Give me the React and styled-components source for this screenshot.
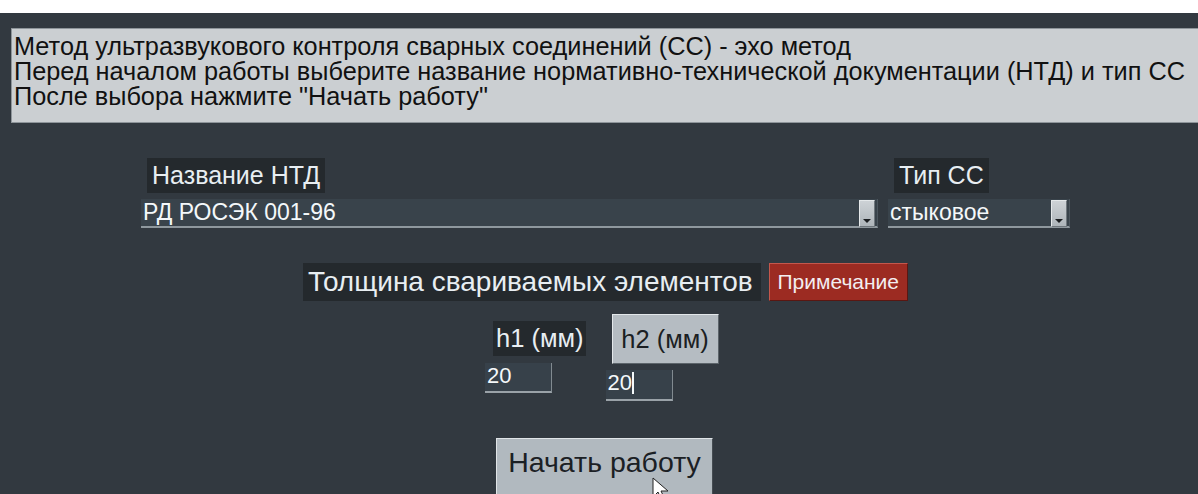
import React from 'react';
import styled, { createGlobalStyle } from 'styled-components';

const GlobalStyle = createGlobalStyle`
  html, body {
    margin: 0;
    padding: 0;
    background: #ffffff;
  }
  body {
    font-family: 'Liberation Sans', Arial, sans-serif;
  }
`;

const Screen = styled.div`
  margin-top: 13px;
  height: 481px;
  background: #323940;
  overflow: hidden;
  position: relative;
`;

const InfoPanel = styled.div`
  margin: 15px 0 0 11px;
  height: 95px;
  box-sizing: border-box;
  padding: 5px 0 0 2px;
  background: #cbcfd2;
  border: 1px solid #8e959a;
  border-right: none;
  color: #111;
  font-size: 25.3px;
  line-height: 25px;
  white-space: nowrap;
`;

const SelectRow = styled.div`
  display: flex;
  margin: 35px 0 0 141px;
  gap: 10px;
`;

const Field = styled.div`
  display: flex;
  flex-direction: column;
  width: ${p => p.$w}px;
`;

const Label = styled.span`
  align-self: flex-start;
  margin-left: ${p => p.$indent || 0}px;
  padding: ${p => p.$pad || '4px 5px'};
  background: #24292d;
  color: #e8eef2;
  font-size: ${p => p.$size || 25}px;
  line-height: ${p => p.$lh || 27}px;
  white-space: nowrap;
`;

const Select = styled.div`
  margin-top: 6px;
  height: 29px;
  display: flex;
  align-items: center;
  justify-content: space-between;
  box-sizing: border-box;
  padding: 0 2px 0 2px;
  background: #39434b;
  border-bottom: 2px solid #8f989e;
  border-right: 1px solid #4c565e;
  color: #f4f8fa;
  font-size: 23px;
`;

const DropButton = styled.div`
  width: 16px;
  height: 27px;
  margin-top: 1px;
  box-sizing: border-box;
  background: linear-gradient(#cdd2d6, #aeb5ba);
  border: 1px solid #e4e8ea;
  border-bottom-color: #6f777d;
  border-right-color: #6f777d;
  display: flex;
  align-items: flex-end;
  justify-content: center;
  padding-bottom: 3px;

  &::after {
    content: '';
    border-left: 4px solid transparent;
    border-right: 4px solid transparent;
    border-top: 4px solid #1b1e21;
  }
`;

const ThicknessRow = styled.div`
  display: flex;
  align-items: center;
  gap: 8px;
  margin: 35px 0 0 303px;
`;

const NoteButton = styled.button`
  height: 38px;
  width: 139px;
  padding: 0;
  background: #9c2b22;
  border: 1px solid #c4574c;
  border-bottom-color: #5a1712;
  border-right-color: #5a1712;
  color: #f3eef0;
  font-family: inherit;
  font-size: 21px;
`;

const SizeRow = styled.div`
  display: flex;
  gap: 20px;
  margin: 13px 0 0 485px;
`;

const SizeCol = styled.div`
  display: flex;
  flex-direction: column;
  align-items: flex-start;
`;

const SizeButton = styled.button`
  height: 50px;
  width: 107px;
  padding: 0;
  margin-left: 6px;
  background: #b5bcc2;
  border: 1px solid #e3e7ea;
  border-right-color: #5c646a;
  border-bottom-color: #5c646a;
  color: #1b1f23;
  font-family: inherit;
  font-size: 25.5px;
`;

const Input = styled.div`
  width: ${p => p.$w}px;
  height: ${p => p.$h || 30}px;
  margin-top: ${p => p.$top || 0}px;
  box-sizing: border-box;
  padding: 1px 0 0 2px;
  background: #37414a;
  border-bottom: 2px solid #9aa2a8;
  border-right: 1px solid #818a90;
  color: #f4f8fa;
  font-size: 22px;
  line-height: 24px;
`;

const Caret = styled.span`
  display: inline-block;
  width: 2px;
  height: 22px;
  vertical-align: -4px;
  background: #f4f8fa;
`;

const StartButton = styled.button`
  display: block;
  margin: 37px 0 0 496px;
  width: 217px;
  height: 58px;
  padding: 0 0 9px;
  background: #b1b9bf;
  border: 1px solid #e0e4e7;
  border-right-color: #454c52;
  border-bottom-color: #454c52;
  color: #1b2024;
  font-family: inherit;
  font-size: 28.5px;
`;

// mouse pointer resting over the start button
const Pointer = styled.svg`
  position: absolute;
  left: 652px;
  top: 464px;
`;

export default function App() {
  return (
    <>
      <GlobalStyle />
      <Screen>
        <InfoPanel>
          Метод ультразвукового контроля сварных соединений (СС) - эхо метод<br />
          Перед началом работы выберите название нормативно-технической документации (НТД) и тип СС<br />
          После выбора нажмите "Начать работу"
        </InfoPanel>

        <SelectRow>
          <Field $w={737}>
            <Label $indent={6}>Название НТД</Label>
            <Select>
              РД РОСЭК 001-96
              <DropButton />
            </Select>
          </Field>
          <Field $w={182}>
            <Label $indent={6}>Тип СС</Label>
            <Select>
              стыковое
              <DropButton />
            </Select>
          </Field>
        </SelectRow>

        <ThicknessRow>
          <Label $size={28} $lh={28} $pad="5px 8px 5px 5px">Толщина свариваемых элементов</Label>
          <NoteButton>Примечание</NoteButton>
        </ThicknessRow>

        <SizeRow>
          <SizeCol>
            <Label $size={25.5} $lh={27} $indent={8} $pad="4px 2px 4px 3px" style={{ marginTop: 7 }}>h1 (мм)</Label>
            <Input $w={67} $top={7}>20</Input>
          </SizeCol>
          <SizeCol>
            <SizeButton>h2 (мм)</SizeButton>
            <Input $w={67} $h={31} $top={6}>20<Caret /></Input>
          </SizeCol>
        </SizeRow>

        <StartButton>Начать работу</StartButton>

        <Pointer width="20" height="26" viewBox="0 0 20 26">
          <path d="M1 1 L1 20 L6 15 L10 24 L13 22.5 L9 14 L16 14 Z" fill="#ffffff" stroke="#222" strokeWidth="1" />
        </Pointer>
      </Screen>
    </>
  );
}
